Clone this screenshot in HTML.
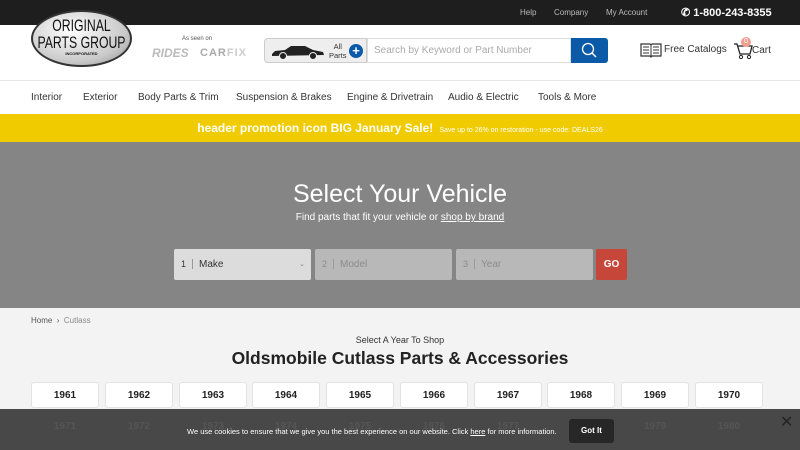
<!DOCTYPE html>
<html><head><style>
*{margin:0;padding:0;box-sizing:border-box}
body{width:800px;height:450px;overflow:hidden;font-family:"Liberation Sans",sans-serif;background:#f3f3f3;position:relative}
.top{height:25px;background:#1e1e1e;color:#bbb;font-size:8px;position:relative}
.top span{position:absolute;top:8px}
.hdr{height:56px;background:#fff;position:relative;border-bottom:1px solid #e5e5e5}
.nav{height:33px;background:#fff;position:relative;font-size:10px;color:#333}
.nav span{position:absolute;top:11px}
.promo{height:28px;background:#efcb00;color:#fff;text-align:center;font-weight:bold;font-size:12px;line-height:28px}
.promo small{font-size:7px;font-weight:normal;margin-left:6px}
.hero{height:166px;background:#858585;position:relative;color:#fff;text-align:center}
.sel{position:absolute;top:107px;height:31px;border-radius:2px;font-size:10px;line-height:31px;padding-left:7px;text-align:left}
.sel b{font-weight:normal;border-right:1px solid #999;padding-right:6px;margin-right:6px;font-size:9px}
.yr{position:absolute;width:68px;height:26px;background:#fff;border:1px solid #e3e3e3;border-radius:3px;font-size:10px;font-weight:bold;text-align:center;line-height:26px;color:#222}
.fy{position:absolute;top:421px;font-size:10px;color:#555;font-weight:bold;width:68px;text-align:center}
</style></head><body>
<div class="top"><span style="left:520px">Help</span><span style="left:554px">Company</span><span style="left:606px">My Account</span><span style="left:681px;top:6px;color:#fff;font-weight:bold;font-size:11px">&#9990; 1-800-243-8355</span></div>
<div class="hdr">
<div style="position:absolute;left:31px;top:-15px;width:101px;height:57px;border-radius:50%;background:radial-gradient(ellipse at 40% 35%,#fff,#c8c8c8 65%,#8a8a8a);border:2px solid #333;text-align:center;color:#111;z-index:2">
<div style="transform:scaleX(0.72);font-size:17px;line-height:17px;margin-top:5px;white-space:nowrap;margin-left:-20px;margin-right:-20px">ORIGINAL<br>PARTS GROUP</div><div style="font-size:4px;font-weight:bold">INCORPORATED</div></div>
<div style="position:absolute;left:182px;top:11px;font-size:6px;color:#555">As seen on</div>
<div style="position:absolute;left:152px;top:21px;font-size:12px;color:#bbb;font-weight:bold;font-style:italic">RIDES</div>
<div style="position:absolute;left:200px;top:22px;font-size:11px;color:#aaa;font-weight:bold;letter-spacing:1px">CAR<span style="color:#ccc">FIX</span></div>
<div style="position:absolute;left:264px;top:13px;width:103px;height:25px;background:#eee;border:1px solid #ccc;border-radius:4px 0 0 4px">
<svg style="position:absolute;left:6px;top:6px" width="54" height="15" viewBox="0 0 54 15"><path d="M1 9 L4 6 L14 5 L20 1 L34 1 L42 5 L52 7 L53 10 L1 11Z" fill="#222"/><circle cx="12" cy="11" r="3.5" fill="#222" stroke="#eee"/><circle cx="42" cy="11" r="3.5" fill="#222" stroke="#eee"/></svg>
<div style="position:absolute;left:64px;top:3px;font-size:7.5px;line-height:9px;text-align:center;color:#333">All<br>Parts</div>
<div style="position:absolute;left:84px;top:5px;width:14px;height:14px;border-radius:50%;background:#0a5aa8;color:#fff;font-size:13px;font-weight:bold;line-height:14px;text-align:center">+</div></div>
<div style="position:absolute;left:367px;top:13px;width:204px;height:25px;border:1px solid #ddd;background:#fff;font-size:10px;color:#aaa;line-height:23px;padding-left:6px">Search by Keyword or Part Number</div>
<div style="position:absolute;left:571px;top:13px;width:37px;height:25px;background:#0a5aa8;border-radius:0 3px 3px 0"><svg width="37" height="25"><circle cx="17" cy="11" r="5.5" stroke="#fff" stroke-width="1.3" fill="none"/><path d="M21 15 L25 19" stroke="#fff" stroke-width="1.5"/></svg></div>
<svg style="position:absolute;left:640px;top:17px" width="22" height="16" viewBox="0 0 22 16"><path d="M1 2 L10 2 L11 3 L12 2 L21 2 L21 14 L12 14 L11 15 L10 14 L1 14Z" fill="none" stroke="#333" stroke-width="1.2"/><path d="M11 3 V14 M3 5h6M3 8h6M3 11h6M13 5h6M13 8h6M13 11h6" stroke="#333"/></svg>
<div style="position:absolute;left:664px;top:19px;font-size:10px;color:#333">Free Catalogs</div>
<svg style="position:absolute;left:733px;top:17px" width="20" height="18" viewBox="0 0 20 18"><path d="M1 2 H4 L7 12 H17 L19 4 H5" fill="none" stroke="#222" stroke-width="1.3"/><circle cx="8" cy="15" r="1.6" fill="none" stroke="#222"/><circle cx="16" cy="15" r="1.6" fill="none" stroke="#222"/></svg>
<div style="position:absolute;left:741px;top:12px;width:10px;height:10px;border-radius:50%;background:#f0a090;color:#fff;font-size:7px;text-align:center;line-height:10px">0</div>
<div style="position:absolute;left:752px;top:20px;font-size:10px;color:#333">Cart</div>
</div>
<div class="nav"><span style="left:31px">Interior</span><span style="left:83px">Exterior</span><span style="left:138px">Body Parts &amp; Trim</span><span style="left:236px">Suspension &amp; Brakes</span><span style="left:347px">Engine &amp; Drivetrain</span><span style="left:448px">Audio &amp; Electric</span><span style="left:538px">Tools &amp; More</span></div>
<div class="promo">header promotion icon BIG January Sale!<small>Save up to 26% on restoration - use code: DEALS26</small></div>
<div class="hero">
<div style="position:absolute;top:38px;width:100%;font-size:25px">Select Your Vehicle</div>
<div style="position:absolute;top:70px;width:100%;font-size:10px">Find parts that fit your vehicle or <u>shop by brand</u></div>
<div class="sel" style="left:174px;width:137px;background:#dcdcdc;color:#333"><b>1</b>Make<span style="position:absolute;right:6px;font-size:7px;color:#888">&#8964;</span></div>
<div class="sel" style="left:315px;width:137px;background:#b8b8b8;color:#8c8c8c"><b>2</b>Model</div>
<div class="sel" style="left:456px;width:137px;background:#b8b8b8;color:#8c8c8c"><b>3</b>Year</div>
<div class="sel" style="left:596px;width:31px;background:#c7463a;color:#fff;padding:0;text-align:center;font-weight:bold">GO</div>
</div>
<div style="position:absolute;top:316px;left:31px;font-size:8px;color:#555">Home &nbsp;›&nbsp; <span style="color:#888">Cutlass</span></div>
<div style="position:absolute;top:335px;width:100%;text-align:center;font-size:9px;color:#333">Select A Year To Shop</div>
<div style="position:absolute;top:348px;width:100%;text-align:center;font-size:17.5px;font-weight:bold;color:#222">Oldsmobile Cutlass Parts &amp; Accessories</div>
<div class="yr" style="left:31px;top:382px">1961</div><div class="yr" style="left:105px;top:382px">1962</div><div class="yr" style="left:179px;top:382px">1963</div><div class="yr" style="left:252px;top:382px">1964</div><div class="yr" style="left:326px;top:382px">1965</div><div class="yr" style="left:400px;top:382px">1966</div><div class="yr" style="left:474px;top:382px">1967</div><div class="yr" style="left:547px;top:382px">1968</div><div class="yr" style="left:621px;top:382px">1969</div><div class="yr" style="left:695px;top:382px">1970</div>
<div style="position:absolute;top:409px;left:0;width:800px;height:41px;background:#484848"></div>
<div class="fy" style="left:31px">1971</div><div class="fy" style="left:105px">1972</div><div class="fy" style="left:179px">1973</div><div class="fy" style="left:252px">1974</div><div class="fy" style="left:326px">1975</div><div class="fy" style="left:400px">1976</div><div class="fy" style="left:474px">1977</div><div class="fy" style="left:621px">1979</div><div class="fy" style="left:695px">1980</div>
<div style="position:absolute;top:427px;left:187px;font-size:7.5px;color:#fff">We use cookies to ensure that we give you the best experience on our website. Click <u>here</u> for more information.</div>
<div style="position:absolute;top:419px;left:569px;width:45px;height:24px;background:#272727;border-radius:3px;color:#fff;font-size:8px;font-weight:bold;text-align:center;line-height:24px">Got It</div>
<div style="position:absolute;top:412px;left:780px;font-size:16px;color:#222">✕</div>
</body></html>
